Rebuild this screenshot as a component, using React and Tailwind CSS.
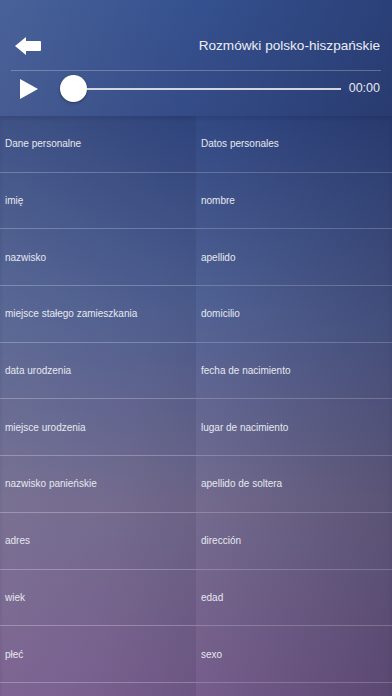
import React from "react";

const rows = [
  ["Dane personalne", "Datos personales"],
  ["imię", "nombre"],
  ["nazwisko", "apellido"],
  ["miejsce stałego zamieszkania", "domicilio"],
  ["data urodzenia", "fecha de nacimiento"],
  ["miejsce urodzenia", "lugar de nacimiento"],
  ["nazwisko panieńskie", "apellido de soltera"],
  ["adres", "dirección"],
  ["wiek", "edad"],
  ["płeć", "sexo"],
  ["", ""],
];

const BackArrow = () => (
  <svg width="28" height="20" viewBox="0 0 28 20">
    <path d="M1 10 L12 1 L12 5 L26 5 Q27 5 27 6 L27 14 Q27 15 26 15 L12 15 L12 19 Z" fill="#fff" />
  </svg>
);

const Play = () => (
  <svg width="18" height="20" viewBox="0 0 18 20">
    <path d="M0 0 L18 10 L0 20 Z" fill="#fff" />
  </svg>
);

const App = () => {
  return (
    <div
      className="relative w-[392px] h-[696px] overflow-hidden text-[#e6e8f0] bg-[linear-gradient(100deg,rgba(255,255,255,0.1)_0%,rgba(0,0,20,0)_40%,rgba(0,0,30,0.32)_100%),linear-gradient(to_bottom,#34508e_0%,#344b86_18%,#56679a_45%,#7e7599_72%,#86699a_100%)]"
      style={{ fontFamily: "'Liberation Sans', Arial, sans-serif" }}
    >
      <div className="h-[116px] flex flex-col">
        <div className="flex items-center justify-between pl-[14px] pr-[12px] pt-[36px] h-[70px] pb-[14px]">
          <BackArrow />
          <span className="text-[13.6px] text-[#eceef4]">Rozmówki polsko-hiszpańskie</span>
        </div>
        <div className="mx-[11px] h-px bg-white/25" />
        <div className="flex items-center h-[35px] pl-[20px] pr-[12px]">
          <Play />
          <div className="flex-1 flex items-center ml-[22px] mr-[8px]">
            <div className="w-[27px] h-[27px] rounded-full bg-white shadow-[0_1px_3px_rgba(0,0,0,0.35)] shrink-0" />
            <div className="flex-1 h-[2px] bg-[#d4d6de]" />
          </div>
          <span className="text-[12.5px] text-[#e6e8f0]">00:00</span>
        </div>
      </div>
      <div className="flex flex-col shadow-[inset_0_3px_4px_rgba(0,0,30,0.12)]">
        {rows.map(([pl, es], i) => (
          <div key={i} className="grid grid-cols-[196px_1fr] h-[56.7px] border-b border-white/20 text-[10px]">
            <div className="flex items-center pl-[5px] bg-[rgba(20,20,50,0.1)]">{pl}</div>
            <div className="flex items-center pl-[5px]">{es}</div>
          </div>
        ))}
      </div>
    </div>
  );
};

export default App;
